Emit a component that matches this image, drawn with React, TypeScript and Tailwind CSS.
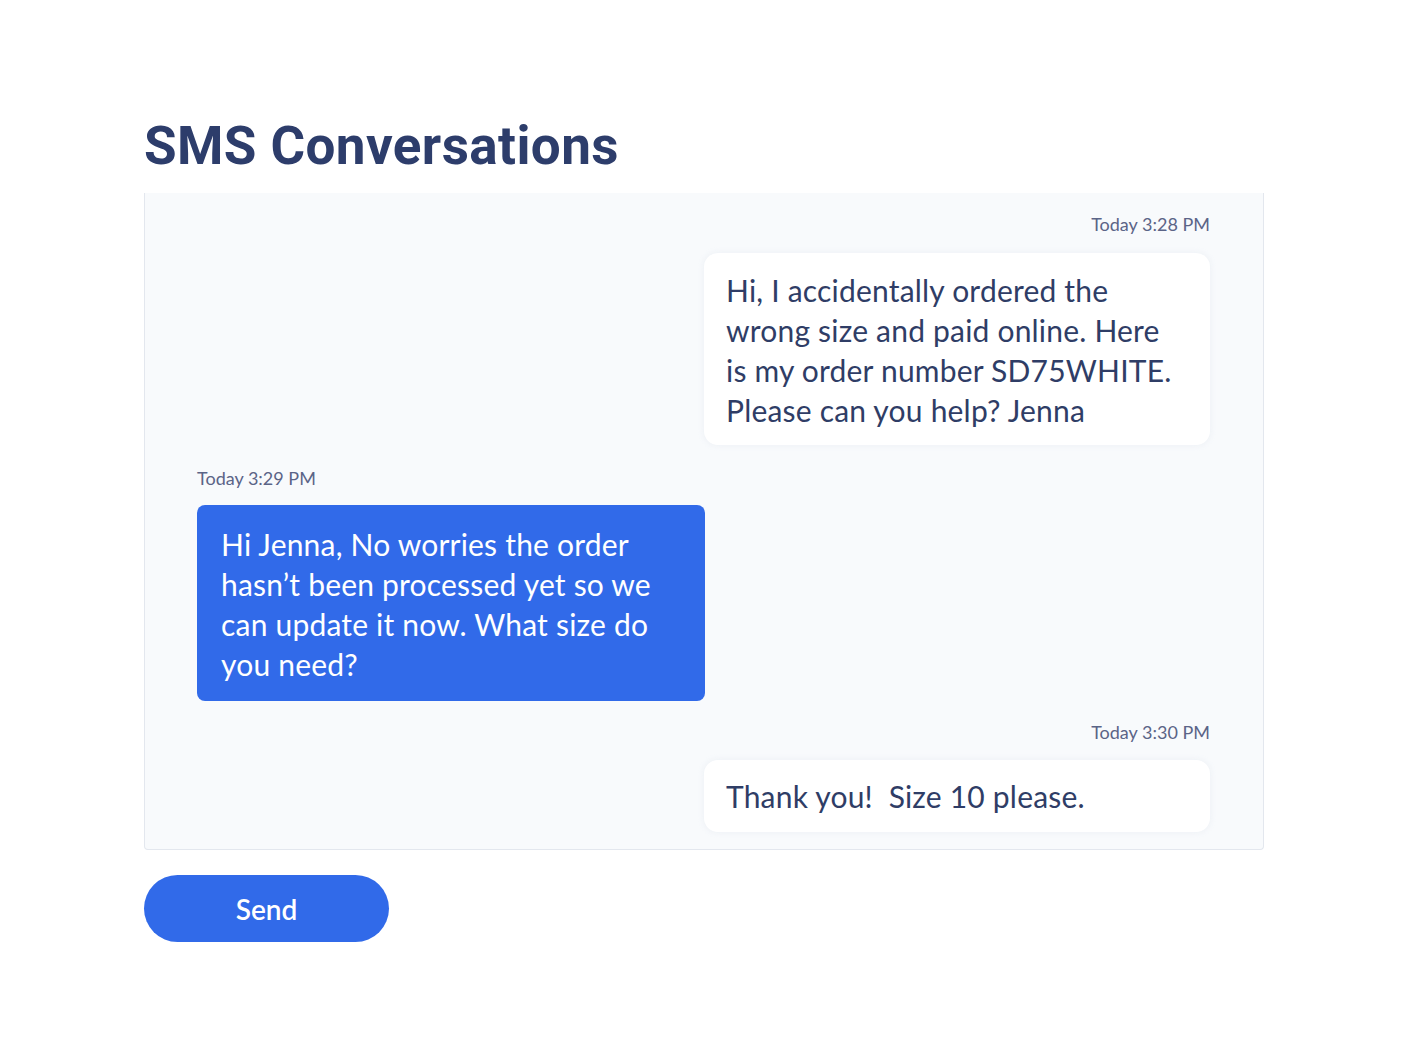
import React from "react";

const bodyFont = { fontFamily: '"Lato", "Noto Sans", sans-serif' };

function Stamp({ text, align }: { text: string; align: "left" | "right" }) {
  return (
    <div
      className={`text-[18px] leading-[24px] text-[#5b6487] ${align === "right" ? "text-right" : "text-left"}`}
    >
      {text}
    </div>
  );
}

export default function App() {
  return (
    <div className="min-h-[1056px] w-full bg-white" style={bodyFont}>
      <div className="mx-auto w-[1120px] pt-[114px]">
        <h1
          className="text-[53px] font-bold leading-[64px] tracking-[0.4px] text-[#2d3d6b]"
          style={{ fontFamily: 'Roboto, "Liberation Sans", sans-serif' }}
        >
          SMS Conversations
        </h1>
        <div className="mt-[15px] flex flex-col rounded-b-[4px] border-x border-b border-[#e3e7ee] bg-[#f8fafc] pb-[17px] pl-[52px] pr-[53px] pt-[19px]">
          <div className="flex flex-col items-end">
            <div className="w-[506px]">
              <Stamp text="Today 3:28 PM" align="right" />
            </div>
            <div className="mt-[17px] w-[506px] rounded-[14px] bg-white px-[22px] pb-[15px] pt-[17px] text-[30px] leading-[40px] tracking-[0.2px] text-[#2f3d66] shadow-[0_0_6px_rgba(226,232,240,0.6)]">
              <span className="block whitespace-nowrap">Hi, I accidentally ordered the</span>
              <span className="block whitespace-nowrap">wrong size and paid online. Here</span>
              <span className="block whitespace-nowrap">is my order number SD75WHITE.</span>
              <span className="block whitespace-nowrap">Please can you help? Jenna</span>
            </div>
          </div>
          <div className="mt-[21px] flex flex-col items-start">
            <Stamp text="Today 3:29 PM" align="left" />
            <div className="mt-[15px] w-[508px] rounded-[8px] bg-[#316ae9] px-[24px] pb-[17px] pt-[19px] text-[30px] leading-[40px] tracking-[0.2px] text-white">
              <span className="block whitespace-nowrap">Hi Jenna, No worries the order</span>
              <span className="block whitespace-nowrap">hasn’t been processed yet so we</span>
              <span className="block whitespace-nowrap">can update it now. What size do</span>
              <span className="block whitespace-nowrap">you need?</span>
            </div>
          </div>
          <div className="mt-[19px] flex flex-col items-end">
            <div className="w-[506px]">
              <Stamp text="Today 3:30 PM" align="right" />
            </div>
            <div className="mt-[16px] w-[506px] rounded-[14px] bg-white px-[22px] py-[16px] text-[30px] leading-[40px] tracking-[0.2px] text-[#2f3d66] shadow-[0_0_6px_rgba(226,232,240,0.6)]">
              Thank you!&nbsp; Size 10 please.
            </div>
          </div>
        </div>
        <button className="mt-[25px] flex h-[67px] w-[245px] items-center justify-center rounded-full bg-[#316ae9] text-[28px] font-semibold text-white">
          Send
        </button>
      </div>
    </div>
  );
}
